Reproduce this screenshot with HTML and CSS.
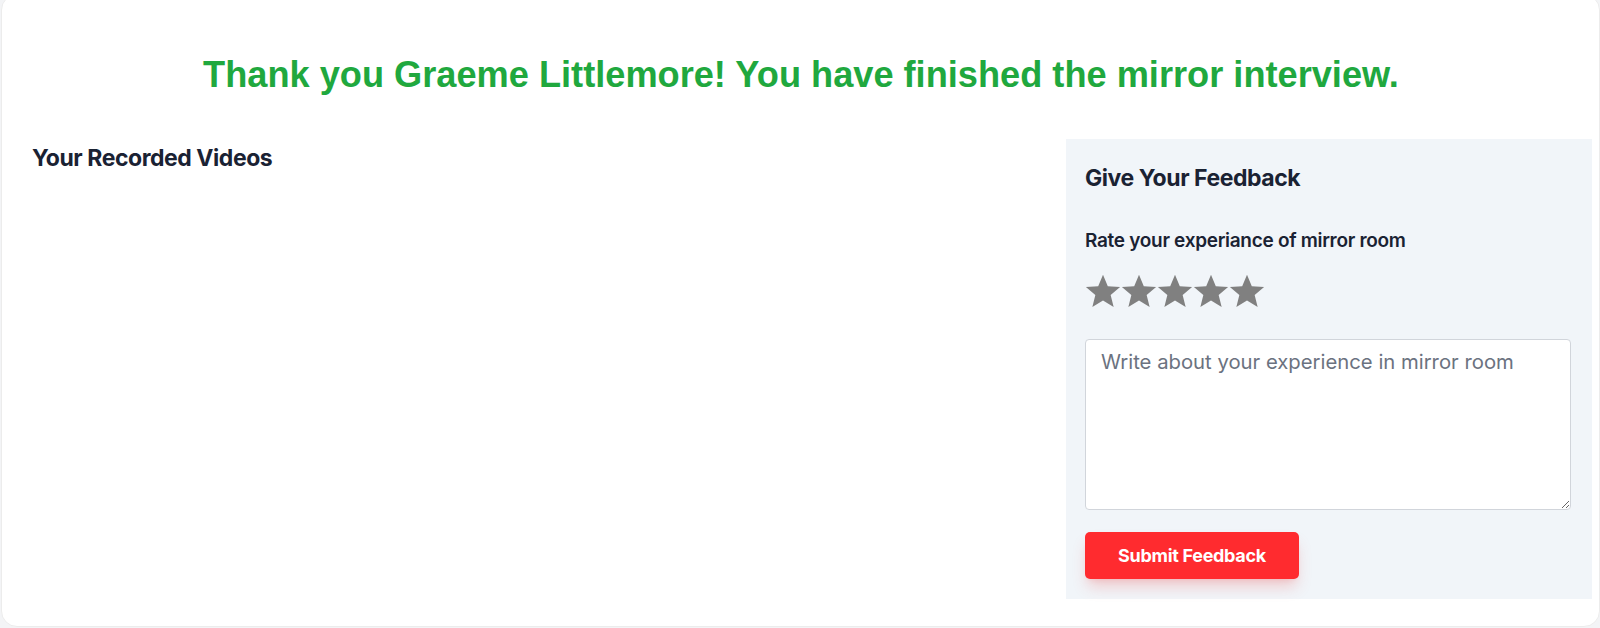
FILE: index.html
```html
<!DOCTYPE html>
<html lang="en">
<head>
<meta charset="utf-8">
<title>Mirror Interview Finished</title>
<link rel="stylesheet" href="styles.css">
</head>
<body>
<div class="card">
  <h1 class="thanks">Thank you Graeme Littlemore! You have finished the mirror interview.</h1>
  <div class="content">
    <section class="videos">
      <h2 class="videos-title">Your Recorded Videos</h2>
    </section>
    <aside class="feedback">
      <h3 class="feedback-title">Give Your Feedback</h3>
      <p class="rate-label">Rate your experiance of mirror room</p>
      <div class="stars">
        <svg class="star" viewBox="0 0 24 24"><path d="M12 1.2l3.2 7.6 8.2.6-6.3 5.3 2 8-7.1-4.3-7.1 4.3 2-8L.6 9.4l8.2-.6z"/></svg>
        <svg class="star" viewBox="0 0 24 24"><path d="M12 1.2l3.2 7.6 8.2.6-6.3 5.3 2 8-7.1-4.3-7.1 4.3 2-8L.6 9.4l8.2-.6z"/></svg>
        <svg class="star" viewBox="0 0 24 24"><path d="M12 1.2l3.2 7.6 8.2.6-6.3 5.3 2 8-7.1-4.3-7.1 4.3 2-8L.6 9.4l8.2-.6z"/></svg>
        <svg class="star" viewBox="0 0 24 24"><path d="M12 1.2l3.2 7.6 8.2.6-6.3 5.3 2 8-7.1-4.3-7.1 4.3 2-8L.6 9.4l8.2-.6z"/></svg>
        <svg class="star" viewBox="0 0 24 24"><path d="M12 1.2l3.2 7.6 8.2.6-6.3 5.3 2 8-7.1-4.3-7.1 4.3 2-8L.6 9.4l8.2-.6z"/></svg>
      </div>
      <textarea class="comment" placeholder="Write about your experience in mirror room"></textarea>
      <button class="submit" type="button">Submit Feedback</button>
    </aside>
  </div>
</div>
</body>
</html>
```

FILE: styles.css
```css
* { box-sizing: border-box; }
html, body { margin: 0; padding: 0; }
body {
  background: #f3f4f6;
  font-family: Inter, "Noto Sans", sans-serif;
  color: #1a2233;
  height: 628px;
  overflow: hidden;
}
.card {
  background: #fff;
  margin: -6px 0 0 1px;
  height: 633px;
  border: 1px solid #ececec;
  border-radius: 16px;
  padding: 0 7px 0 0;
}
.thanks {
  margin: 0;
  padding-top: 59px;
  padding-left: 8px;
  text-align: center;
  font-family: "Liberation Sans", Arial, sans-serif;
  font-weight: 700;
  font-size: 36.2px;
  line-height: 41px;
  color: #20a83e;
}
.content {
  display: flex;
  margin-top: 44px;
}
.videos {
  flex: 1;
  padding-left: 30px;
}
.videos-title {
  margin: 4px 0 0;
  font-size: 23px;
  line-height: 30px;
  font-weight: 700;
  letter-spacing: -0.45px;
}
.feedback {
  width: 526px;
  background: #f1f5f9;
  padding: 24px 21px 20px 19px;
  height: 460px;
}
.feedback-title {
  margin: 0;
  font-size: 23px;
  line-height: 30px;
  font-weight: 700;
  letter-spacing: -0.45px;
}
.rate-label {
  margin: 35px 0 0;
  font-size: 19px;
  line-height: 26px;
  font-weight: 600;
  letter-spacing: -0.3px;
}
.stars {
  display: flex;
  margin-top: 19px;
}
.star {
  width: 36px;
  height: 36px;
  fill: #808080;
}
.comment {
  display: block;
  width: 100%;
  height: 171px;
  margin-top: 30px;
  border: 1px solid #d1d5db;
  border-radius: 4px;
  background: #fff;
  padding: 8px 15px;
  font-family: Inter, "Noto Sans", sans-serif;
  font-size: 20.3px;
  line-height: 28px;
  color: #1a2233;
  resize: vertical;
}
.comment::placeholder { color: #6b7280; }
.submit {
  display: block;
  margin-top: 22px;
  width: 214px;
  height: 47px;
  border: none;
  border-radius: 5px;
  background: #ff2b2f;
  color: #fff;
  font-family: Inter, "Noto Sans", sans-serif;
  font-weight: 700;
  font-size: 18px;
  letter-spacing: -0.3px;
  box-shadow: 0 10px 15px -3px rgba(239, 68, 68, 0.25), 0 4px 6px -4px rgba(239, 68, 68, 0.2);
}
```
